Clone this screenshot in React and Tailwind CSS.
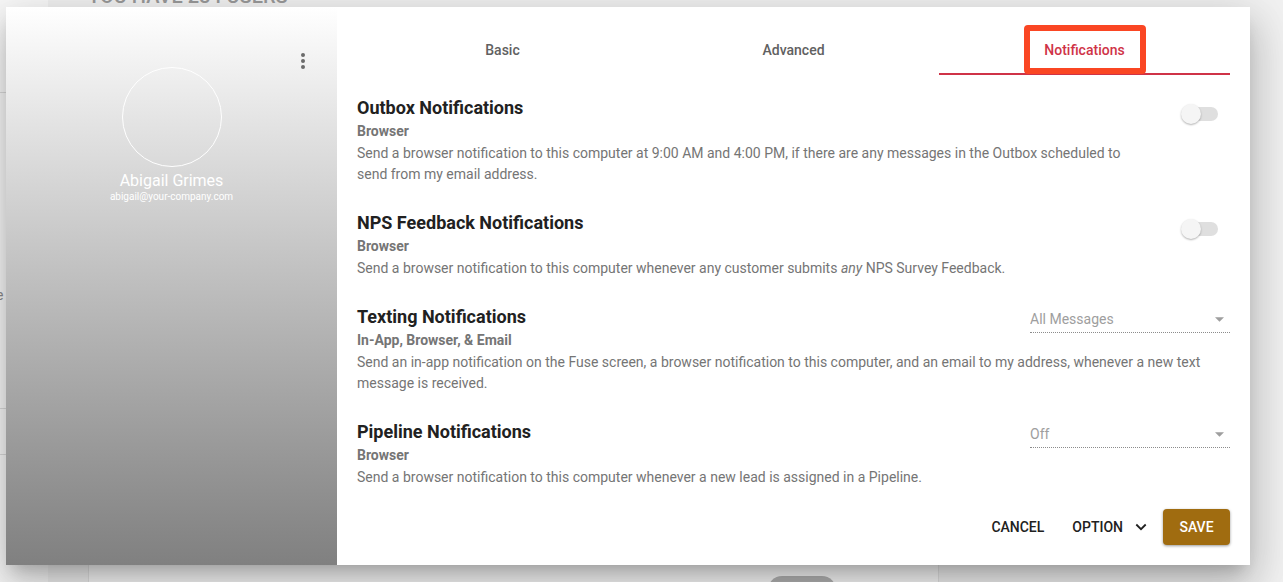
import React, { useState } from 'react';
import clsx from 'clsx';

const TABS = ['Basic', 'Advanced', 'Notifications'];

const SETTINGS = [
  {
    id: 'outbox',
    title: 'Outbox Notifications',
    channel: 'Browser',
    control: 'switch',
    description:
      'Send a browser notification to this computer at 9:00 AM and 4:00 PM, if there are any messages in the Outbox scheduled to send from my email address.'
  },
  {
    id: 'nps',
    title: 'NPS Feedback Notifications',
    channel: 'Browser',
    control: 'switch',
    description: (
      <>
        Send a browser notification to this computer whenever any customer submits <em>any</em> NPS Survey Feedback.
      </>
    )
  },
  {
    id: 'texting',
    title: 'Texting Notifications',
    channel: 'In-App, Browser, & Email',
    control: 'select',
    value: 'All Messages',
    description:
      'Send an in-app notification on the Fuse screen, a browser notification to this computer, and an email to my address, whenever a new text message is received.'
  },
  {
    id: 'pipeline',
    title: 'Pipeline Notifications',
    channel: 'Browser',
    control: 'select',
    value: 'Off',
    description: 'Send a browser notification to this computer whenever a new lead is assigned in a Pipeline.'
  }
];

function PageBehind() {
  return (
    <div className="flex h-screen overflow-hidden bg-[#f2f2f2]">
      <aside className="flex w-12 shrink-0 flex-col bg-[#fafafa] text-sm text-[#8c8c8c]">
        <div className="h-[93px] border-b border-[#dcdcdc]" />
        <div className="flex h-[316px] flex-col justify-center border-b border-[#dcdcdc] pt-[88px]">
          <span className="-ml-1">e</span>
        </div>
        <div className="h-[46px] border-b border-[#dcdcdc]" />
      </aside>
      <main className="flex grow flex-col justify-between">
        <h1 className="-mt-[18px] pl-10 text-xl font-medium text-[#9a9a9a]">YOU HAVE 23 FUSERS</h1>
        <div className="mr-[344px] ml-10 flex h-10 items-start justify-end overflow-hidden border-x border-[#e4e4e4] bg-[#fafafa] pt-[34px] pr-[102px]">
          <div className="h-7 w-[68px] shrink-0 rounded-full bg-[#b4b4b4]" />
        </div>
      </main>
    </div>
  );
}

function ProfilePanel() {
  return (
    <section className="relative flex w-[331px] shrink-0 flex-col items-center bg-linear-to-b from-white to-[#808080] pt-[60px] text-white">
      <button type="button" aria-label="More" className="absolute top-[42px] right-[22px] text-[#6b6b6b]">
        <svg viewBox="0 0 24 24" className="h-6 w-6" fill="currentColor">
          <circle cx="12" cy="6" r="2" />
          <circle cx="12" cy="12" r="2" />
          <circle cx="12" cy="18" r="2" />
        </svg>
      </button>
      <div className="h-[100px] w-[100px] rounded-full border border-white" />
      <div className="mt-1 text-base leading-5">Abigail Grimes</div>
      <div className="text-[10px] leading-3">abigail@your-company.com</div>
    </section>
  );
}

function Setting({ item, value, onChange }) {
  const isSwitch = item.control === 'switch';

  return (
    <div className={clsx('relative', isSwitch && 'pr-[90px]')}>
      <label htmlFor={item.id} className="block text-lg leading-6 font-bold text-[#212121]">
        {item.title}
      </label>
      <div className="text-sm leading-[23px] font-bold text-[#757575]">{item.channel}</div>
      <p className="text-sm leading-[21px] text-[#757575]">{item.description}</p>

      {isSwitch ? (
        <input
          id={item.id}
          type="checkbox"
          role="switch"
          checked={value}
          onChange={(event) => onChange(event.target.checked)}
          className="absolute top-[11px] right-3 h-3.5 w-9 appearance-none rounded-full bg-[#dfdfdf] before:absolute before:-top-[3px] before:-left-px before:h-5 before:w-5 before:rounded-full before:bg-[#f5f5f5] before:shadow-[0_1px_2px_rgba(0,0,0,0.3)] checked:before:left-[17px]"
        />
      ) : (
        <div className="absolute top-0 right-0 w-[200px] text-[#9e9e9e]">
          <select
            id={item.id}
            value={value}
            onChange={(event) => onChange(event.target.value)}
            className="block h-7 w-full appearance-none border-b border-dotted border-[#8c8c8c] bg-transparent text-sm"
          >
            <option>All Messages</option>
            <option>Off</option>
          </select>
          <svg viewBox="0 0 10 5" className="pointer-events-none absolute top-3 right-1.5 h-[5px] w-[9px]" fill="currentColor">
            <path d="M0 0h10L5 5z" />
          </svg>
        </div>
      )}
    </div>
  );
}

function App() {
  const [tab, setTab] = useState('Notifications');
  const [values, setValues] = useState({ outbox: false, nps: false, texting: 'All Messages', pipeline: 'Off' });

  return (
    <div className="relative font-[Roboto,sans-serif]">
      <PageBehind />

      <div
        role="dialog"
        className="absolute top-[7px] right-[33px] left-[6px] flex bg-white shadow-[0_11px_15px_-7px_rgba(0,0,0,0.2),0_24px_38px_3px_rgba(0,0,0,0.14),0_9px_46px_8px_rgba(0,0,0,0.12)]"
      >
        <ProfilePanel />

        <div className="min-w-0 grow p-5">
          <nav className="grid grid-cols-3">
            {TABS.map((name) => (
              <button
                key={name}
                type="button"
                onClick={() => setTab(name)}
                className={clsx(
                  'relative h-12 border-b-2 text-sm font-medium',
                  tab === name ? 'border-[#cf3347] text-[#cf3347]' : 'border-transparent text-[#616161]'
                )}
              >
                {name}
                {name === 'Notifications' && (
                  <span className="absolute -top-0.5 left-1/2 h-[49px] w-[122px] -translate-x-1/2 rounded-[4px] border-6 border-[#fa4623]" />
                )}
              </button>
            ))}
          </nav>

          <div className="mt-[21px] flex flex-col gap-[26px]">
            {SETTINGS.map((item) => (
              <Setting
                key={item.id}
                item={item}
                value={values[item.id]}
                onChange={(value) => setValues((current) => ({ ...current, [item.id]: value }))}
              />
            ))}
          </div>

          <div className="mt-[21px] flex items-center justify-end text-sm font-medium text-[#212121]">
            <button type="button" className="mr-7">CANCEL</button>
            <button type="button" className="mr-4 flex items-center gap-3">
              OPTION
              <svg viewBox="0 0 12 8" className="h-2 w-3" fill="none" stroke="currentColor" strokeWidth="1.8">
                <path d="M1.3 1.5 6 6.2l4.7-4.7" />
              </svg>
            </button>
            <button type="button" className="h-9 min-w-[67px] rounded bg-[#a06c10] px-4 text-white shadow-[0_1px_3px_rgba(0,0,0,0.4)]">
              SAVE
            </button>
          </div>
        </div>
      </div>
    </div>
  );
}

export default App;
